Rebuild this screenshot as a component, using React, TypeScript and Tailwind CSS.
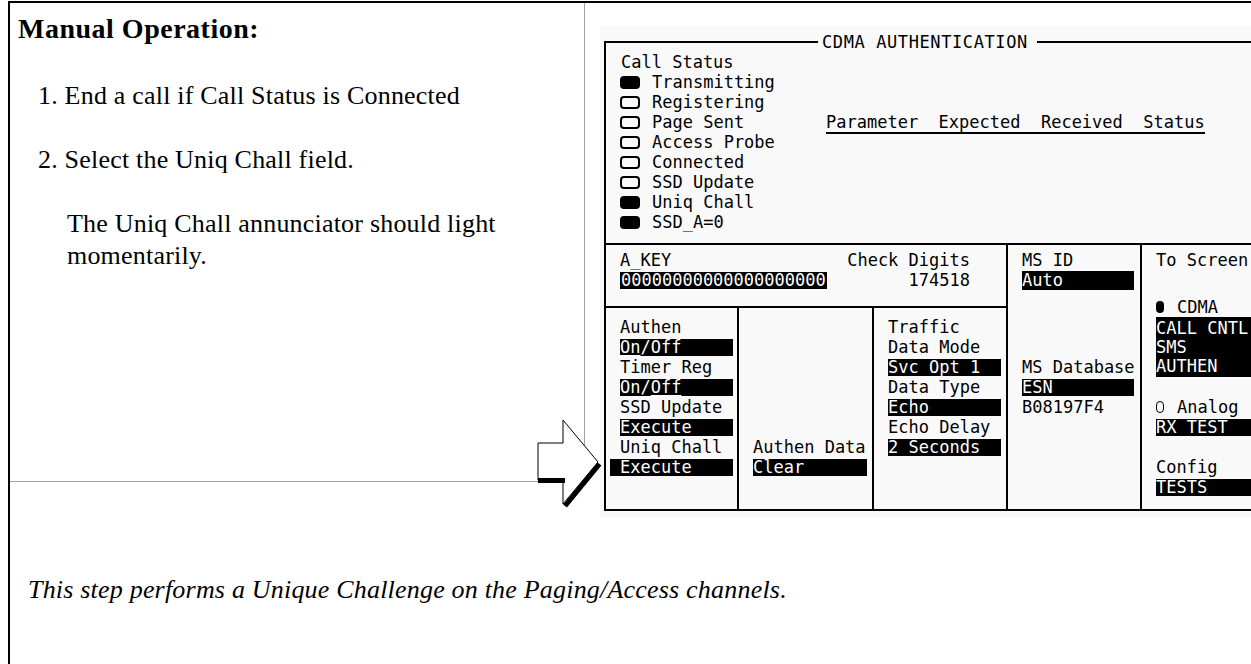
import React from 'react'

type Kids = { children?: React.ReactNode; className?: string }

// one 20px text row of the instrument screen
function Line({ children, className = '' }: Kids) {
  return <div className={`flex h-[20px] items-center whitespace-pre ${className}`}>{children}</div>
}

// inverse-video field
function Hi({ children, className = '' }: Kids) {
  return <div className={`flex h-[17px] items-center whitespace-pre bg-black text-white ${className}`}>{children}</div>
}

function Lamp({ on }: { on: boolean }) {
  return on ? (
    <span className="h-[13px] w-[20px] rounded-[4px] bg-black" />
  ) : (
    <span className="h-[13px] w-[20px] rounded-[4px] border-2 border-black" />
  )
}

const statuses: [string, boolean][] = [
  ['Transmitting', true],
  ['Registering', false],
  ['Page Sent', false],
  ['Access Probe', false],
  ['Connected', false],
  ['SSD Update', false],
  ['Uniq Chall', true],
  ['SSD_A=0', true],
]

function Screen() {
  return (
    <div className="h-[492px] w-[651px] bg-[#f9f9f9] pl-[4px] pt-[9px] font-['DejaVu_Sans_Mono',monospace] text-[17px] leading-none text-black">
      {/* title bar */}
      <div className="flex h-[16px] items-center">
        <div className="h-[2px] w-[214px] bg-black" />
        <span className="pl-[4px] pr-[9px] tracking-[0.6px]">CDMA AUTHENTICATION</span>
        <div className="h-[2px] flex-1 bg-black" />
      </div>

      <div className="-mt-[7px] border-b-2 border-l-2 border-black">
        {/* call status + results */}
        <div className="flex h-[202px] border-b-2 border-black pl-[14px] pt-[9px]">
          <div className="w-[206px]">
            <Line className="pl-[1px]">Call Status</Line>
            {statuses.map(([label, on]) => (
              <Line key={label}>
                <Lamp on={on} />
                <span className="ml-[12px]">{label}</span>
              </Line>
            ))}
          </div>
          <div className="mt-[60px] flex h-[22px] items-center border-b-2 border-black whitespace-pre">
            Parameter  Expected  Received  Status
          </div>
        </div>

        <div className="flex h-[264px]">
          <div className="flex w-[402px] flex-col border-r-2 border-black">
            <div className="flex h-[63px] justify-between border-b-2 border-black pl-[14px] pr-[36px] pt-[5px]">
              <div>
                <Line>A_KEY</Line>
                <Line>
                  <Hi className="h-[15px] px-[1px]">00000000000000000000</Hi>
                </Line>
              </div>
              <div>
                <Line>Check Digits</Line>
                <Line className="justify-end">174518</Line>
              </div>
            </div>
            <div className="flex flex-1">
              <div className="w-[133px] border-r-2 border-black pl-[14px] pt-[9px]">
                <Line>Authen</Line>
                <Line>
                  <Hi className="w-[113px]">
                    <span className="underline underline-offset-2">On</span>/Off
                  </Hi>
                </Line>
                <Line>Timer Reg</Line>
                <Line>
                  <Hi className="w-[113px]">
                    On/<span className="underline underline-offset-2">Off</span>
                  </Hi>
                </Line>
                <Line>SSD Update</Line>
                <Line>
                  <Hi className="w-[113px]">Execute</Hi>
                </Line>
                <Line>Uniq Chall</Line>
                <Line>
                  <Hi className="-ml-[10px] w-[123px] pl-[10px]">Execute</Hi>
                </Line>
              </div>
              <div className="w-[135px] border-r-2 border-black pl-[14px] pt-[129px]">
                <Line>Authen Data</Line>
                <Line>
                  <Hi className="w-[114px]">Clear</Hi>
                </Line>
              </div>
              <div className="flex-1 pl-[14px] pt-[9px]">
                <Line>Traffic</Line>
                <Line>Data Mode</Line>
                <Line>
                  <Hi className="w-[113px]">Svc Opt 1</Hi>
                </Line>
                <Line>Data Type</Line>
                <Line>
                  <Hi className="w-[113px]">Echo</Hi>
                </Line>
                <Line>Echo Delay</Line>
                <Line>
                  <Hi className="w-[113px]">2 Seconds</Hi>
                </Line>
              </div>
            </div>
          </div>

          <div className="w-[134px] border-r-2 border-black pl-[14px] pt-[5px]">
            <Line>MS ID</Line>
            <Line>
              <Hi className="h-[19px] w-[112px]">Auto</Hi>
            </Line>
            <div className="h-[67px]" />
            <Line>MS Database</Line>
            <Line>
              <Hi className="w-[112px]">ESN</Hi>
            </Line>
            <Line>B08197F4</Line>
          </div>

          <div className="flex-1 pl-[14px] pt-[5px]">
            <Line>To Screen</Line>
            <div className="h-[27px]" />
            <Line>
              <span className="h-[12px] w-[8px] rounded-full bg-black" />
              <span className="ml-[13px]">CDMA</span>
            </Line>
            <div className="flex h-[60px] flex-col justify-center bg-black text-white">
              <Line>CALL CNTL</Line>
              <div className="-mt-[1px]">
                <Line>SMS</Line>
              </div>
              <div className="-mt-[1px]">
                <Line>AUTHEN</Line>
              </div>
            </div>
            <div className="h-[20px]" />
            <Line>
              <span className="h-[12px] w-[8px] rounded-full border-[1.5px] border-black" />
              <span className="ml-[13px]">Analog</span>
            </Line>
            <Line>
              <Hi className="w-full">RX TEST</Hi>
            </Line>
            <div className="h-[20px]" />
            <Line>Config</Line>
            <Line>
              <Hi className="w-full">TESTS</Hi>
            </Line>
          </div>
        </div>
      </div>
    </div>
  )
}

function Arrow() {
  return (
    <svg className="absolute left-[520px] top-[407px]" width="80" height="110" viewBox="0 0 80 110">
      <polygon points="8,33 33,33 33,10 68,52 33,94 33,70 8,70" fill="#fff" stroke="#000" strokeWidth="1" />
      <line x1="8" y1="70.5" x2="35" y2="70.5" stroke="#000" strokeWidth="5" />
      <line x1="69.5" y1="54" x2="35" y2="96" stroke="#000" strokeWidth="5" />
    </svg>
  )
}

export default function App() {
  return (
    <div className="h-[664px] overflow-hidden bg-white pt-[1px] pl-[8px]">
      <div className="relative h-[663px] border-l-2 border-t-2 border-black font-['Liberation_Serif',serif] text-black">
        <div className="flex items-start">
          <div className="h-[479px] w-[575px] shrink-0 border-b border-r border-[#a0a0a0] pl-[8px] pt-[10px]">
            <h1 className="text-[28px] font-bold leading-[32px] tracking-[0.5px]">Manual Operation:</h1>
            <div className="ml-[20px] mt-[35px] text-[26px] leading-[32px] tracking-[0.2px]">
              <p>1. End a call if Call Status is Connected</p>
              <p className="mt-[32px]">2. Select the Uniq Chall field.</p>
              <p className="ml-[29px] mt-[32px]">
                The Uniq Chall annunciator should light
                <br />
                momentarily.
              </p>
            </div>
          </div>
          <div className="shrink-0 pl-[15px] pt-[22px]">
            <Screen />
          </div>
        </div>
        <p className="ml-[18px] mt-[57px] text-[26px] italic leading-[32px] tracking-[0.2px]">
          This step performs a Unique Challenge on the Paging/Access channels.
        </p>
        <Arrow />
      </div>
    </div>
  )
}
